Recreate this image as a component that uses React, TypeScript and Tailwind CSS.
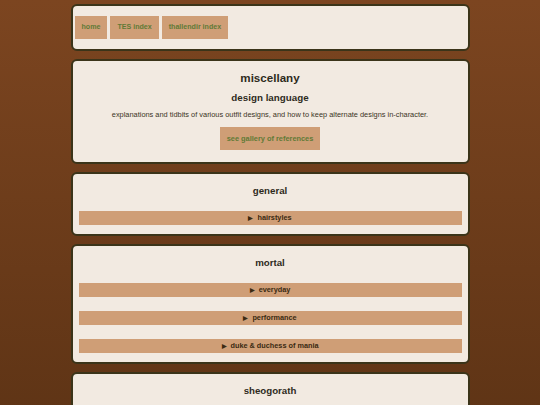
const FONT = "font-['Liberation_Sans',Arial,sans-serif]";

const NAV_LINKS = ['home', 'TES index', 'thallendir index'];

function Card({ children, className = '' }: { children: React.ReactNode; className?: string }) {
  return (
    <section className={`w-[399px] rounded-[6px] border-2 border-[#3b3419] bg-[#f2eae1] ${className}`}>
      {children}
    </section>
  );
}

function Disclosure({ label }: { label: string }) {
  return (
    <div className="flex h-[14px] items-center justify-center gap-[4px] bg-[#cf9e76] text-[7.3px] font-bold text-[#3a2a12]">
      <span className="text-[6px]">▶</span>
      <span>{label}</span>
    </div>
  );
}

function Section({ title, items }: { title: string; items: string[] }) {
  return (
    <Card className="px-[6px] pt-[10px] pb-[9px]">
      <h3 className="text-center text-[9.7px] font-bold leading-[14px] text-[#2e2a1c]">{title}</h3>
      <div className="mt-[13px] flex flex-col gap-[14px]">
        {items.map((item) => (
          <Disclosure key={item} label={item} />
        ))}
      </div>
    </Card>
  );
}

export default function App() {
  return (
    <div className={`${FONT} flex min-h-screen w-full flex-col items-center gap-[8px] bg-gradient-to-b from-[#7c4520] to-[#5b3214] pt-[4px] pb-[8px]`}>
      <Card className="flex h-[47px] items-center gap-[3px] px-[2px]">
        {NAV_LINKS.map((link) => (
          <a key={link} className="flex h-[23px] items-center bg-[#cf9e76] px-[7px] text-[7.1px] font-bold text-[#617a36]">
            {link}
          </a>
        ))}
      </Card>

      <Card className="flex flex-col items-center pt-[9px] pb-[12px]">
        <h1 className="text-[11.6px] font-bold leading-[16px] text-[#2e2a1c]">miscellany</h1>
        <h2 className="mt-[5px] text-[9.8px] font-bold leading-[14px] text-[#2e2a1c]">design language</h2>
        <p className="mt-[5px] text-[7.4px] leading-[10px] text-[#3a3424]">
          explanations and tidbits of various outfit designs, and how to keep alternate designs in-character.
        </p>
        <a className="mt-[7px] flex h-[23px] items-center bg-[#cf9e76] px-[7px] text-[7.4px] font-bold text-[#617a36]">
          see gallery of references
        </a>
      </Card>

      <Section title="general" items={['hairstyles']} />
      <Section title="mortal" items={['everyday', 'performance', 'duke & duchess of mania']} />
      <Section title="sheogorath" items={['everyday', 'formal']} />
    </div>
  );
}
